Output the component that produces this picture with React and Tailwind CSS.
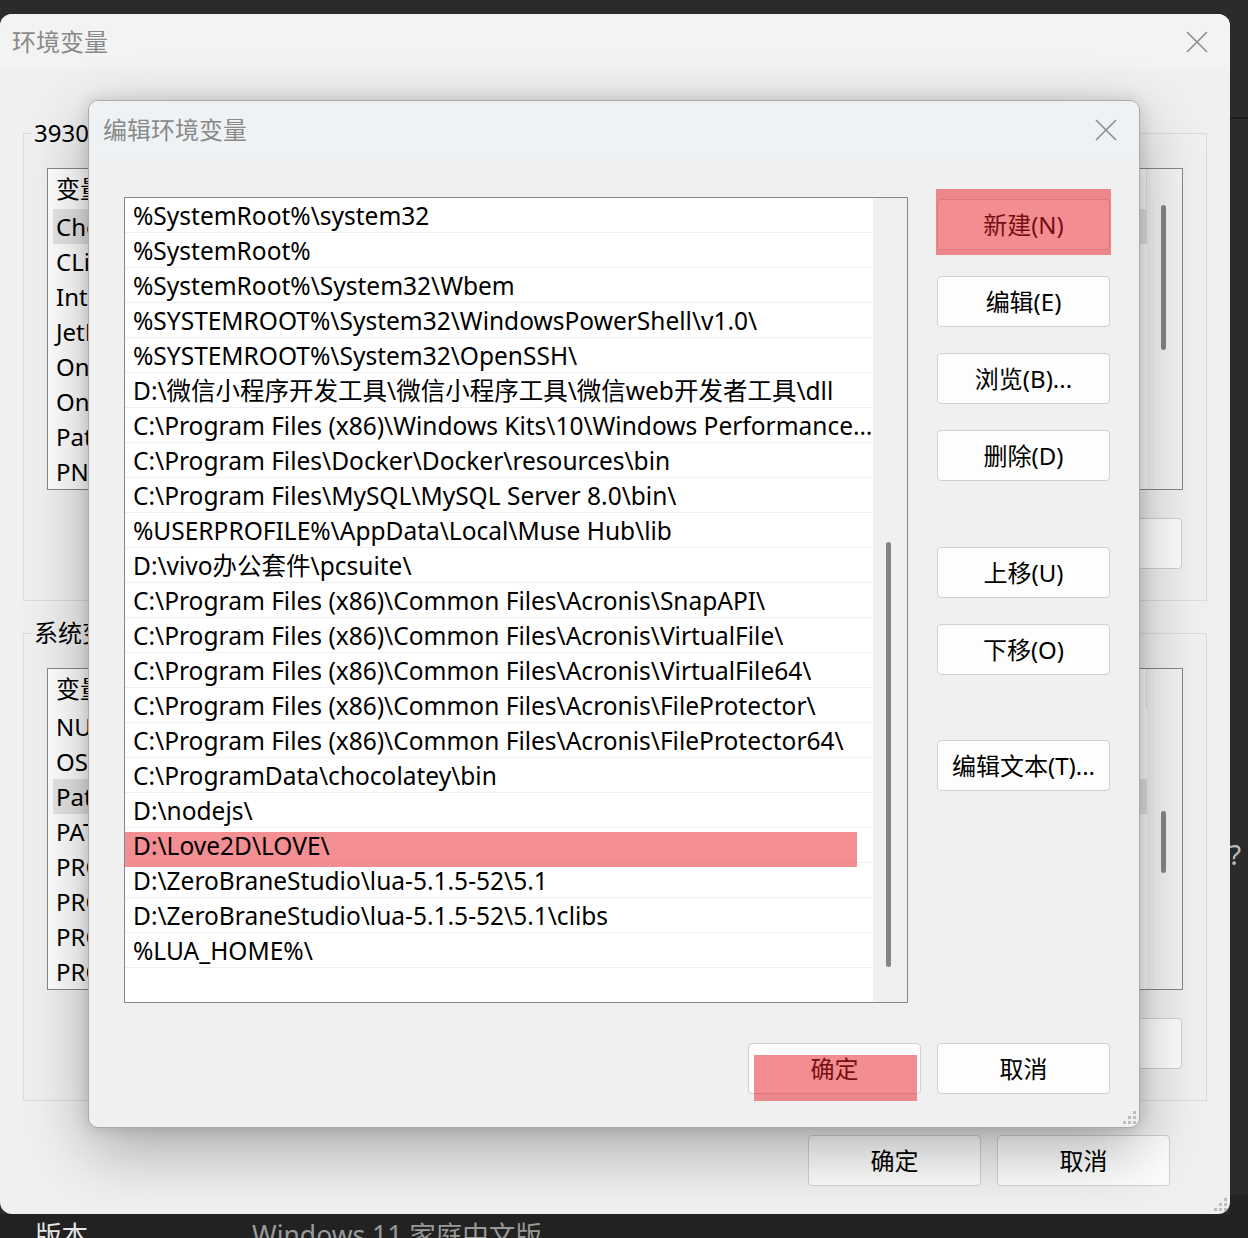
const PATHS = [
  '%SystemRoot%\\system32',
  '%SystemRoot%',
  '%SystemRoot%\\System32\\Wbem',
  '%SYSTEMROOT%\\System32\\WindowsPowerShell\\v1.0\\',
  '%SYSTEMROOT%\\System32\\OpenSSH\\',
  'D:\\微信小程序开发工具\\微信小程序工具\\微信web开发者工具\\dll',
  'C:\\Program Files (x86)\\Windows Kits\\10\\Windows Performance Toolkit\\',
  'C:\\Program Files\\Docker\\Docker\\resources\\bin',
  'C:\\Program Files\\MySQL\\MySQL Server 8.0\\bin\\',
  '%USERPROFILE%\\AppData\\Local\\Muse Hub\\lib',
  'D:\\vivo办公套件\\pcsuite\\',
  'C:\\Program Files (x86)\\Common Files\\Acronis\\SnapAPI\\',
  'C:\\Program Files (x86)\\Common Files\\Acronis\\VirtualFile\\',
  'C:\\Program Files (x86)\\Common Files\\Acronis\\VirtualFile64\\',
  'C:\\Program Files (x86)\\Common Files\\Acronis\\FileProtector\\',
  'C:\\Program Files (x86)\\Common Files\\Acronis\\FileProtector64\\',
  'C:\\ProgramData\\chocolatey\\bin',
  'D:\\nodejs\\',
  'D:\\Love2D\\LOVE\\',
  'D:\\ZeroBraneStudio\\lua-5.1.5-52\\5.1',
  'D:\\ZeroBraneStudio\\lua-5.1.5-52\\5.1\\clibs',
  '%LUA_HOME%\\',
];

const USER_VARS = ['ChocolateyLastPathUpdate', 'CLion', 'IntelliJ IDEA', 'JetBrains Gateway', 'OneDrive', 'OneDriveConsumer', 'Path', 'PNPM_HOME'];
const SYS_VARS = ['NUMBER_OF_PROCESSORS', 'OS', 'Path', 'PATHEXT', 'PROCESSOR_ARCHITECTURE', 'PROCESSOR_IDENTIFIER', 'PROCESSOR_LEVEL', 'PROCESSOR_REVISION'];

// translucent red marker drawn over the screenshot
const MARK = 'bg-[rgba(232,30,38,0.5)]';

function CloseX() {
  return (
    <svg width="22" height="22" viewBox="0 0 22 22">
      <path d="M1 1L21 21M21 1L1 21" stroke="#8c8c8c" strokeWidth="1.6" fill="none" />
    </svg>
  );
}

function Grip() {
  return (
    <svg width="16" height="16" viewBox="0 0 16 16" fill="#bdbdbd">
      <rect x="12" y="2" width="3" height="3" />
      <rect x="7" y="7" width="3" height="3" />
      <rect x="12" y="7" width="3" height="3" />
      <rect x="2" y="12" width="3" height="3" />
      <rect x="7" y="12" width="3" height="3" />
      <rect x="12" y="12" width="3" height="3" />
    </svg>
  );
}

function Btn({ children, className = '' }) {
  return (
    <button className={`h-[51px] w-[173px] shrink-0 rounded-[4px] border border-[#d0d0d0] bg-[#fdfdfd] text-[24px] leading-none text-black ${className}`}>
      {children}
    </button>
  );
}

function VarList({ items, selected, thumbTop, thumbH }) {
  return (
    <div className="relative flex h-[322px] border border-[#828790] bg-white">
      <div className="flex-1">
        <div className="flex h-[40px] items-center">
          <div className="flex h-full w-[400px] items-center pl-[8px] border-r border-[#e5e5e5]">变量</div>
          <div className="flex h-full flex-1 items-center pl-[8px] border-r border-[#e5e5e5]">值</div>
        </div>
        {items.map((v, i) => (
          <div key={i} className={`ml-[5px] flex h-[35px] items-center pl-[3px] ${i === selected ? 'bg-[#e5e5e5]' : ''}`}>
            {v}
          </div>
        ))}
      </div>
      <div className="relative w-[35px] bg-[#f4f4f4]">
        <div className="absolute left-[14px] w-[5px] rounded-full bg-[#858585]" style={{ top: thumbTop, height: thumbH }} />
      </div>
    </div>
  );
}

function GroupBox({ label, children, className = '' }) {
  return (
    <div className={`relative mx-[23px] h-[468px] border border-[#dcdcdc] px-[23px] pt-[34px] ${className}`}>
      <span className="absolute left-[8px] -top-[17px] bg-[#f0f0f0] px-[2px] leading-[32px]">{label}</span>
      {children}
      <div className="mt-[28px] flex justify-end gap-[16px] pr-[1px]">
        <Btn>新建(N)...</Btn>
        <Btn>编辑(E)...</Btn>
        <Btn>删除(D)</Btn>
      </div>
    </div>
  );
}

export default function App() {
  return (
    <div className="relative h-[1238px] w-[1248px] overflow-hidden bg-[#2b2b2b] pt-[14px] font-['Noto_Sans','Noto_Sans_CJK_SC',sans-serif] text-[24px] text-black">
      <div className="absolute right-0 top-[117px] h-[2px] w-[18px] bg-[#1c1c1c]" />
      <div className="absolute right-0 top-[1195px] h-[43px] w-[18px] bg-[#232323]" />
      <span className="absolute left-[1229px] top-[840px] text-[28px] leading-none text-[#bdbdbd]">?</span>

      {/* outer window: 环境变量 */}
      <div className="relative h-[1200px] w-[1230px] overflow-hidden rounded-[12px] bg-[#f0f0f0]">
        <div className="flex h-[56px] items-center justify-between bg-[#f3f3f3] pl-[12px] pr-[22px]">
          <span className="text-[#8a8a8a]">环境变量</span>
          <CloseX />
        </div>

        <GroupBox label="39309 的用户变量(U)" className="mt-[63px]">
          <VarList items={USER_VARS} selected={0} thumbTop={36} thumbH={145} />
        </GroupBox>

        <GroupBox label="系统变量(S)" className="mt-[32px]">
          <VarList items={SYS_VARS} selected={2} thumbTop={142} thumbH={62} />
        </GroupBox>

        <div className="mt-[34px] flex justify-end gap-[16px] pr-[60px]">
          <Btn className="bg-[#efefef] border-[#c4c4c4]">确定</Btn>
          <Btn className="bg-[#efefef] border-[#c4c4c4]">取消</Btn>
        </div>

        <div className="absolute bottom-[2px] right-[2px]">
          <Grip />
        </div>

        {/* inner dialog: 编辑环境变量 */}
        <div className="absolute left-[88px] top-[86px] flex h-[1028px] w-[1052px] flex-col overflow-hidden rounded-[10px] border border-[#a9a9a9] bg-[#f0f0f0] shadow-[0_22px_64px_rgba(0,0,0,0.3),0_0_16px_rgba(0,0,0,0.14)]">
          <div className="flex h-[57px] items-center justify-between bg-[#eef2f5] pl-[14px] pr-[22px]">
            <span className="text-[#8a8a8a]">编辑环境变量</span>
            <CloseX />
          </div>

          <div className="flex pl-[35px] pt-[39px]">
            <div className="flex h-[806px] w-[784px] border border-[#828790] bg-white">
              <div className="w-[748px] text-[24.5px]">
                {PATHS.map((p, i) => (
                  <div key={i} className="relative flex h-[35px] items-center border-b border-[#efefef] pl-[8px] pt-[2px]">
                    {i === 18 && <div className={`absolute left-0 right-[16px] top-[4px] h-[35px] ${MARK}`} />}
                    <span className="relative truncate">{p}</span>
                  </div>
                ))}
              </div>
              <div className="relative flex-1 bg-[#f0f0f0]">
                <div className="absolute left-[13px] top-[344px] h-[425px] w-[5px] rounded-full bg-[#858585]" />
              </div>
            </div>

            <div className="ml-[29px] flex flex-col pt-[2px]">
              <div className="relative">
                <Btn>新建(N)</Btn>
                <div className={`absolute -left-px -right-px -top-[10px] -bottom-[5px] ${MARK}`} />
              </div>
              <Btn className="mt-[26px]">编辑(E)</Btn>
              <Btn className="mt-[26px]">浏览(B)...</Btn>
              <Btn className="mt-[26px]">删除(D)</Btn>
              <Btn className="mt-[66px]">上移(U)</Btn>
              <Btn className="mt-[26px]">下移(O)</Btn>
              <Btn className="mt-[65px]">编辑文本(T)...</Btn>
            </div>
          </div>

          <div className="mt-[40px] flex justify-end gap-[16px] pr-[29px]">
            <div className="relative">
              <Btn>确定</Btn>
              <div className={`absolute left-[6px] right-[4px] top-[12px] -bottom-[7px] ${MARK}`} />
            </div>
            <Btn>取消</Btn>
          </div>

          <div className="absolute bottom-[2px] right-[2px]">
            <Grip />
          </div>
        </div>
      </div>

      <div className="flex h-[24px] w-[1230px] items-start bg-[#222222] pl-[35px] pt-[5px] text-[26.5px] leading-[32px]">
        <span className="text-[#e6e6e6]">版本</span>
        <span className="ml-[164px] text-[#999999]">Windows 11 家庭中文版</span>
      </div>
    </div>
  );
}
